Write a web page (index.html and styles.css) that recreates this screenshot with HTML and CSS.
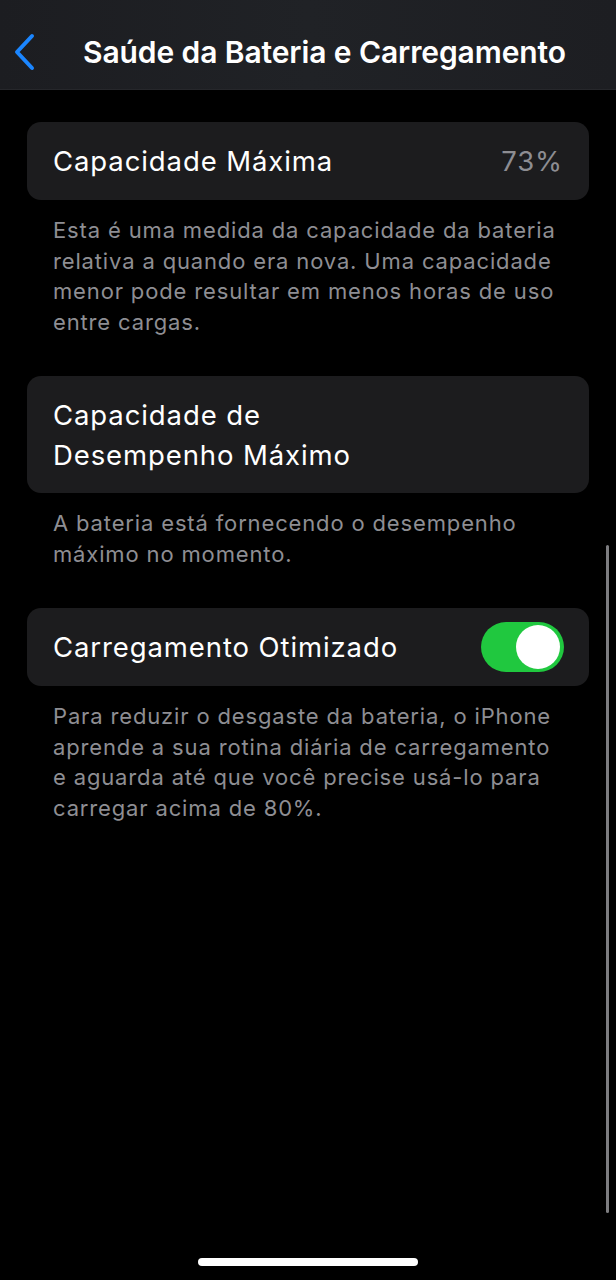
FILE: index.html
```html
<!DOCTYPE html>
<html lang="pt-BR">
<head>
    <meta charset="UTF-8">
    <meta name="viewport" content="width=device-width, initial-scale=1.0">
    <title>Saúde da Bateria e Carregamento</title>
    <link rel="stylesheet" href="styles.css">
</head>
<body>
    <header class="nav-bar">
        <a href="#" class="back" aria-label="Voltar">
            <svg width="24" height="38" viewBox="0 0 24 38">
                <path d="M19 3 L4 19 L19 35" fill="none" stroke="#1b86ff" stroke-width="4" stroke-linecap="round" stroke-linejoin="round"/>
            </svg>
        </a>
        <h1>Saúde da Bateria e Carregamento</h1>
    </header>

    <main class="content">
        <section class="group">
            <div class="cell">
                <span class="label">Capacidade Máxima</span>
                <span class="value">73%</span>
            </div>
            <p class="footer">Esta é uma medida da capacidade da bateria relativa a quando era nova. Uma capacidade menor pode resultar em menos horas de uso entre cargas.</p>
        </section>

        <section class="group">
            <div class="cell tall">
                <span class="label">Capacidade de<br>Desempenho Máximo</span>
            </div>
            <p class="footer">A bateria está fornecendo o desempenho máximo no momento.</p>
        </section>

        <section class="group">
            <div class="cell">
                <span class="label">Carregamento Otimizado</span>
                <span class="switch on" role="switch" aria-checked="true"></span>
            </div>
            <p class="footer">Para reduzir o desgaste da bateria, o iPhone aprende a sua rotina diária de carregamento e aguarda até que você precise usá-lo para carregar acima de 80%.</p>
        </section>
    </main>

    <div class="scroll-indicator"></div>
    <div class="home-indicator"></div>
</body>
</html>
```

FILE: styles.css
```css
body {
    font-family: Inter, "Noto Sans", sans-serif;
    background-color: #000;
    color: #fff;
    margin: 0;
    width: 616px;
    height: 1280px;
    position: relative;
    overflow: hidden;
}

.nav-bar {
    height: 90px;
    background: linear-gradient(90deg, #1c1d21 0%, #202226 50%, #1d1e22 100%);
    border-bottom: 1px solid #26272b;
    box-sizing: border-box;
    display: flex;
    align-items: center;
    padding: 14px 0 0 13px;
}

.back {
    display: flex;
    width: 24px;
}

h1 {
    margin: 0 0 0 46px;
    font-size: 30px;
    font-weight: 600;
    letter-spacing: -0.1px;
}

.content {
    padding: 32px 27px 0 27px;
}

.group {
    margin-bottom: 39px;
}

.cell {
    background-color: #1c1c1e;
    border-radius: 14px;
    height: 78px;
    box-sizing: border-box;
    padding: 0 26px;
    display: flex;
    align-items: center;
    justify-content: space-between;
}

.cell.tall {
    height: 117px;
}

.label {
    font-size: 27.5px;
    line-height: 40px;
    letter-spacing: 0.9px;
}

.value {
    font-size: 27.5px;
    letter-spacing: 0.9px;
    color: #8d8d92;
}

.switch {
    width: 83px;
    height: 50px;
    border-radius: 25px;
    background-color: #20c83f;
    position: relative;
    margin-right: -1px;
}

.switch::after {
    content: '';
    position: absolute;
    right: 4px;
    top: 3px;
    width: 44px;
    height: 44px;
    border-radius: 50%;
    background-color: #fff;
}

.footer {
    margin: 15px 26px 0 26px;
    font-size: 22px;
    line-height: 30.5px;
    letter-spacing: 0.85px;
    color: #8e8e93;
}

.scroll-indicator {
    position: absolute;
    left: 606px;
    top: 545px;
    width: 3px;
    height: 668px;
    border-radius: 2px;
    background-color: #7d7d80;
}

.home-indicator {
    position: absolute;
    left: 198px;
    top: 1258px;
    width: 220px;
    height: 8px;
    border-radius: 4px;
    background-color: #fff;
}
```
